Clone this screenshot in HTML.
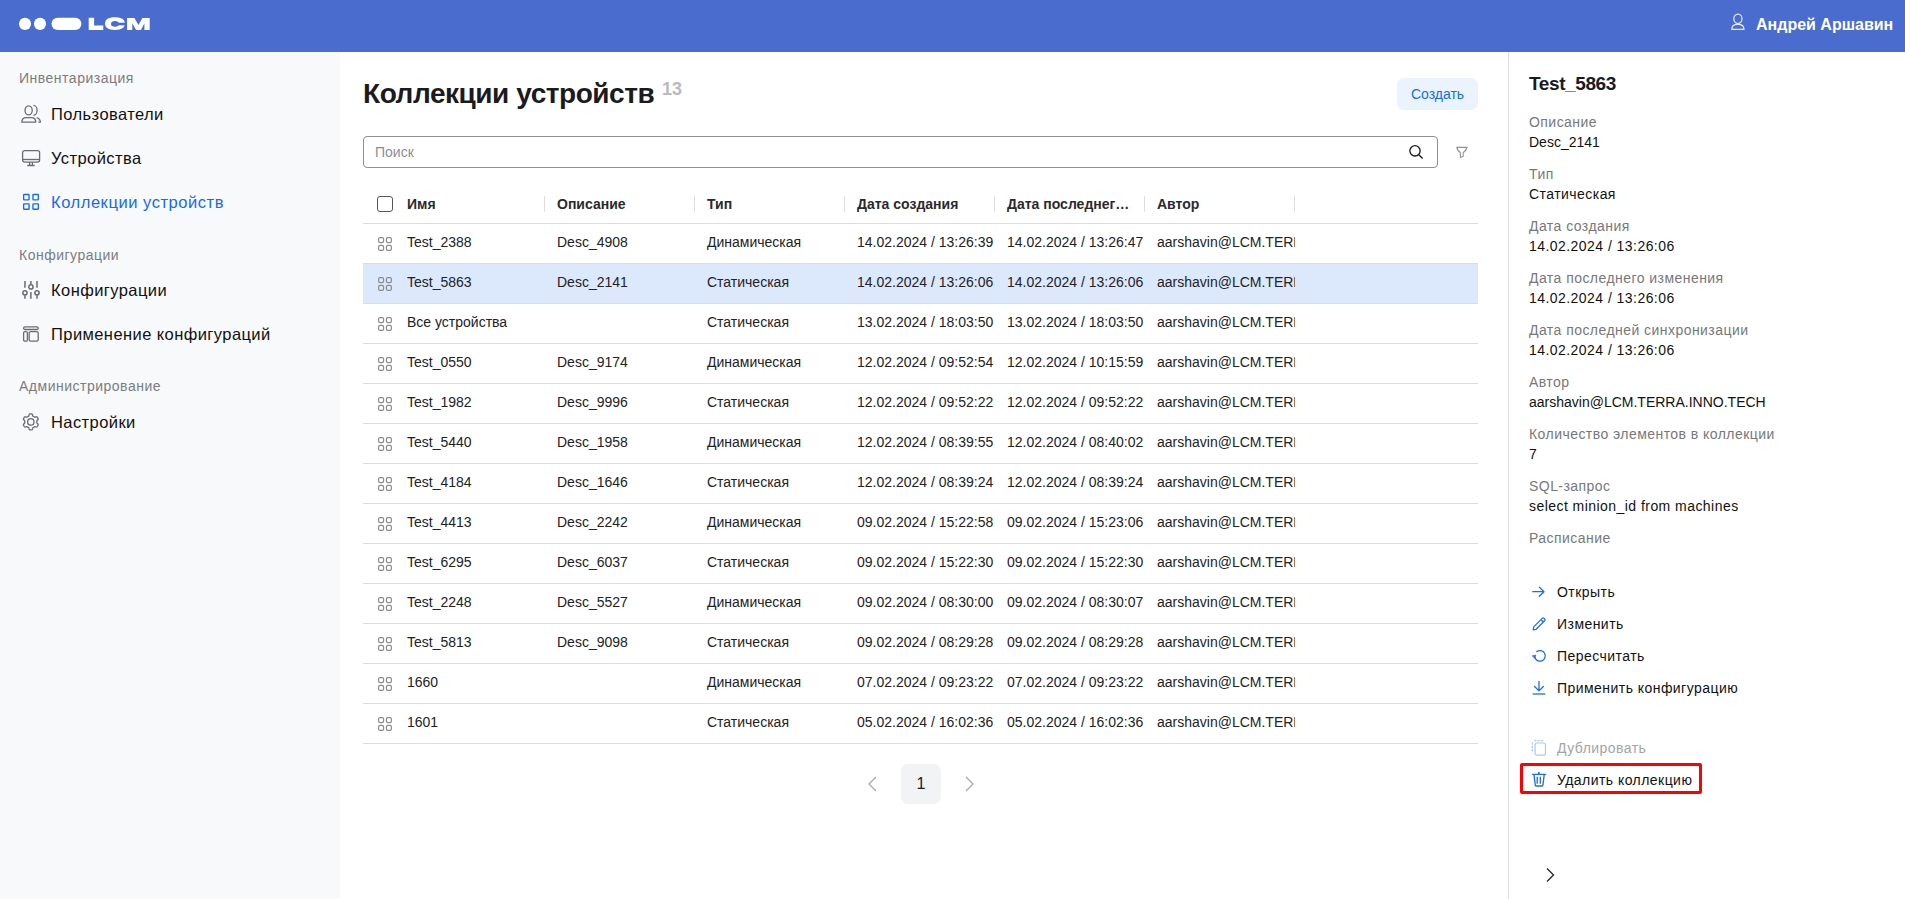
<!DOCTYPE html>
<html><head><meta charset="utf-8">
<style>
*{box-sizing:border-box;margin:0;padding:0}
html,body{width:1905px;height:899px;overflow:hidden;background:#fff;font-family:"Liberation Sans",sans-serif;color:#1b1b1f}
svg{display:block}
#hdr{position:absolute;left:0;top:0;width:1905px;height:52px;background:#4a6ccf}
#logo{position:absolute}
#user{position:absolute;left:1756px;top:15px;font-size:16px;font-weight:bold;color:#fff;line-height:20px;white-space:nowrap}
#uico{position:absolute}
#side{position:absolute;left:0;top:52px;width:340px;height:847px;background:#f8f9fb}
#panel{position:absolute;left:1508px;top:52px;width:397px;height:847px;background:#fff;border-left:1px solid #dcdde1}
.sec{position:absolute;left:19px;font-size:14px;color:#7c7c80;letter-spacing:0.5px;line-height:16px;white-space:nowrap}
.item{position:absolute;left:51px;font-size:16.5px;letter-spacing:0.42px;color:#111;line-height:20px;white-space:nowrap}
.ico{position:absolute;left:21px}
#main{position:absolute;left:340px;top:52px;width:1168px;height:847px;background:#fff}
#title{position:absolute;left:23px;top:25px;font-size:28px;font-weight:bold;color:#1b1b1f;line-height:34px;white-space:nowrap;letter-spacing:-0.45px}
#cnt{position:absolute;left:322px;top:27px;font-size:18px;font-weight:bold;color:#b9babf;line-height:20px}
#create{position:absolute;left:1057px;top:26px;width:81px;height:32px;border-radius:7px;background:#ebf3fe;color:#156af3;font-size:14px;line-height:32px;text-align:center}
#search{position:absolute;left:23px;top:84px;width:1075px;height:32px;border:1px solid #8e9096;border-radius:4px;background:#fff}
#search span{position:absolute;left:11px;top:0;line-height:30px;font-size:14px;color:#8d8e93}
#sico{position:absolute;left:1068px;top:92px}
#fico{position:absolute;left:1115px;top:94px}
#thead{position:absolute;left:23px;top:134px;width:1115px;height:38px;border-bottom:1px solid #dcdde1}
#thead .h{position:absolute;top:0;line-height:36px;font-size:14px;font-weight:bold;color:#2a2a2e;white-space:nowrap}
#thead .sep{position:absolute;top:10px;width:1px;height:16px;background:#dcdde1}
#cb{position:absolute;left:14px;top:10px;width:16px;height:16px;border:1px solid #55565b;border-radius:3px;background:#fff}
.row{position:absolute;left:363px;width:1115px;height:40px;border-bottom:1px solid #dcdde1;background:#fff}
.row.sel{background:#dce8fc}
.row .c{position:absolute;top:0;line-height:37px;font-size:14px;color:#222225;white-space:nowrap}
.row .au{width:138px;overflow:hidden}
.rico{position:absolute;left:14px;top:12px}
#pg1{position:absolute;left:901px;top:764px;width:40px;height:40px;border-radius:7px;background:#f2f3f5;font-size:16px;line-height:40px;text-align:center;color:#1b1b1f}
.ptitle{position:absolute;left:20px;top:21px;letter-spacing:-0.4px;font-size:19px;font-weight:bold;color:#1b1b1f;line-height:22px;white-space:nowrap}
.plab{position:absolute;left:20px;font-size:14px;letter-spacing:0.45px;color:#77777c;line-height:16px;white-space:nowrap}
.pval{position:absolute;left:20px;font-size:14px;color:#111;line-height:16px;white-space:nowrap}
.act{position:absolute;left:48px;font-size:14px;letter-spacing:0.45px;color:#111;line-height:16px;white-space:nowrap}
.aico{position:absolute;left:22px}
#redbox{position:absolute;left:11px;top:711px;width:182px;height:31px;border:3px solid #ff0000;border-radius:2px}
</style></head><body>
<div id="hdr">
  <svg id="logo" style="left:0;top:0" width="160" height="40" viewBox="0 0 160 40">
    <circle cx="25" cy="23.85" r="6.05" fill="#fff"/>
    <circle cx="40" cy="23.85" r="6.05" fill="#fff"/>
    <rect x="51.5" y="17.7" width="29.9" height="12.3" rx="6.15" fill="#fff"/>
    <path fill="#fff" d="M88.7 17.7 H94.1 V25.6 H103.3 V30 H88.7 Z"/>
    <path fill="#fff" d="M105.05 23.60 C105.05 19.38 108.42 17.20 114.95 17.20 C121.48 17.20 124.85 19.38 124.85 23.60 C124.85 27.82 121.48 30.00 114.95 30.00 C108.42 30.00 105.05 27.82 105.05 23.60 Z"/><path fill="#4a6ccf" d="M110.95 23.90 C110.95 22.16 112.49 21.10 115.00 21.10 C117.51 21.10 119.05 22.16 119.05 23.90 C119.05 25.64 117.51 26.70 115.00 26.70 C112.49 26.70 110.95 25.64 110.95 23.90 Z"/><rect x="115" y="22.7" width="11" height="2.6" fill="#4a6ccf"/>
    <path fill="#fff" d="M127.1 29.9 V17.9 H134.4 L138.4 25 L142.4 17.9 H149.7 V29.9 H144.4 V23.2 L141 29.9 H136.1 L132.3 23.2 V29.9 Z"/>
  </svg>
  <svg id="uico" style="left:1730px;top:13px" width="16" height="18" viewBox="0 0 16 18" fill="none" stroke="#e6ebf8" stroke-width="1.2">
    <ellipse cx="7.9" cy="5.8" rx="4.1" ry="4.7"/>
    <path d="M1.8 16.4 Q1.8 11.3 7.9 11.3 Q14 11.3 14 16.4 Z" stroke-linejoin="round"/>
  </svg>
  <div id="user">Андрей Аршавин</div>
</div>
<div id="side">
  <div class="sec" style="top:18px">Инвентаризация</div>
  <svg class="ico" style="top:52px;left:21px" width="21" height="20" viewBox="0 0 21 20" fill="none" stroke="#6b6c70" stroke-width="1.3">
    <ellipse cx="7.6" cy="6.35" rx="3.65" ry="4.55"/><path d="M0.75 18.1 Q1.2 13.65 5 13.65 H10.6 Q14.4 13.65 14.85 18.1 Z" stroke-linejoin="round"/>
    <path d="M12.4 1.4 A3.7 4.95 0 0 1 12.4 11.3"/><path d="M15.7 13.7 Q19.1 14.6 19.4 18.1 H17.4" stroke-linejoin="round"/>
  </svg>
  <div class="item" style="top:52px">Пользователи</div>
  <svg class="ico" style="top:97px" width="20" height="18" viewBox="0 0 20 18" fill="none" stroke="#6b6c70" stroke-width="1.3">
    <rect x="1.6" y="1.6" width="17" height="11.5" rx="2"/><path d="M1.6 10.5 H18.6"/><path d="M8.6 13.2 V16.2 M11.4 13.2 V16.2 M6.3 16.5 H13.7"/>
  </svg>
  <div class="item" style="top:96px">Устройства</div>
  <svg class="ico" style="top:141px;left:21px" width="20" height="18" viewBox="0 0 20 18" fill="none" stroke="#1769f0" stroke-width="1.35">
    <rect x="2.65" y="1.45" width="5.4" height="5.4" rx="0.6"/><rect x="11.95" y="1.45" width="5.4" height="5.4" rx="0.6"/><rect x="2.65" y="10.85" width="5.4" height="5.4" rx="0.6"/><rect x="11.95" y="10.85" width="5.4" height="5.4" rx="0.6"/>
  </svg>
  <div class="item" style="top:140px;color:#1769f0;letter-spacing:0.55px">Коллекции устройств</div>
  <div class="sec" style="top:195px">Конфигурации</div>
  <svg class="ico" style="top:228px;left:21px" width="20" height="20" viewBox="0 0 20 20" fill="none" stroke="#6b6c70" stroke-width="1.5">
    <path d="M3.95 1 V7.8 M3.95 15.3 V18.7 M9.9 1 V4.3 M9.9 11.9 V18.7 M16 1 V7.8 M16 15.3 V18.7"/>
    <circle cx="3.95" cy="12.8" r="2.15"/><circle cx="9.9" cy="6.9" r="2.15"/><circle cx="16" cy="12.8" r="2.15"/>
  </svg>
  <div class="item" style="top:228px">Конфигурации</div>
  <svg class="ico" style="top:273px" width="20" height="18" viewBox="0 0 20 18" fill="none" stroke="#6b6c70" stroke-width="1.3">
    <rect x="2.6" y="1.8" width="14.6" height="2.7" rx="1.3"/><rect x="2.6" y="6.6" width="3.8" height="9.6" rx="1.3"/><rect x="8.2" y="6.6" width="9" height="9.6" rx="1.4"/>
  </svg>
  <div class="item" style="top:272px">Применение конфигураций</div>
  <div class="sec" style="top:326px">Администрирование</div>
  <svg class="ico" style="top:360px;left:21px" width="20" height="20" viewBox="0 0 20 20" fill="none" stroke="#6b6c70" stroke-width="1.3">
    <path d="M9.80 1.95 L10.22 1.96 L10.63 1.99 L11.04 2.05 L11.39 2.41 L11.62 3.11 L11.77 3.82 L11.99 4.21 L12.28 4.33 L12.57 4.46 L12.85 4.62 L13.12 4.78 L13.39 4.96 L13.64 5.16 L14.08 5.15 L14.77 4.93 L15.49 4.77 L15.98 4.90 L16.23 5.23 L16.47 5.57 L16.68 5.93 L16.88 6.29 L17.06 6.67 L17.22 7.05 L17.09 7.53 L16.59 8.08 L16.05 8.57 L15.82 8.95 L15.87 9.26 L15.89 9.58 L15.90 9.90 L15.89 10.22 L15.87 10.54 L15.82 10.85 L16.05 11.23 L16.59 11.72 L17.09 12.27 L17.22 12.75 L17.06 13.13 L16.88 13.51 L16.68 13.88 L16.47 14.23 L16.23 14.57 L15.98 14.90 L15.49 15.03 L14.77 14.87 L14.08 14.65 L13.64 14.64 L13.39 14.84 L13.12 15.02 L12.85 15.18 L12.57 15.34 L12.28 15.47 L11.99 15.59 L11.77 15.98 L11.62 16.69 L11.39 17.39 L11.04 17.75 L10.63 17.81 L10.22 17.84 L9.80 17.85 L9.38 17.84 L8.97 17.81 L8.56 17.75 L8.21 17.39 L7.98 16.69 L7.83 15.98 L7.61 15.59 L7.32 15.47 L7.03 15.34 L6.75 15.18 L6.48 15.02 L6.21 14.84 L5.96 14.64 L5.52 14.65 L4.83 14.87 L4.11 15.03 L3.62 14.90 L3.37 14.57 L3.13 14.23 L2.92 13.88 L2.72 13.51 L2.54 13.13 L2.38 12.75 L2.51 12.27 L3.01 11.72 L3.55 11.23 L3.78 10.85 L3.73 10.54 L3.71 10.22 L3.70 9.90 L3.71 9.58 L3.73 9.26 L3.78 8.95 L3.55 8.57 L3.01 8.08 L2.51 7.53 L2.38 7.05 L2.54 6.67 L2.72 6.29 L2.92 5.92 L3.13 5.57 L3.37 5.23 L3.62 4.90 L4.11 4.77 L4.83 4.93 L5.52 5.15 L5.96 5.16 L6.21 4.96 L6.48 4.78 L6.75 4.62 L7.03 4.46 L7.32 4.33 L7.61 4.21 L7.83 3.82 L7.98 3.11 L8.21 2.41 L8.56 2.05 L8.97 1.99 L9.38 1.96 Z" stroke-linejoin="round"/>
    <circle cx="9.8" cy="9.9" r="3.2"/>
  </svg>
  <div class="item" style="top:360px">Настройки</div>
</div>

<div id="main">
  <div id="title">Коллекции устройств</div>
  <div id="cnt">13</div>
  <div id="create">Создать</div>
  <div id="search"><span>Поиск</span></div>
  <svg id="sico" width="16" height="16" viewBox="0 0 16 16" fill="none" stroke="#1b1b1f" stroke-width="1.35">
    <circle cx="7" cy="6.8" r="5.15"/><path d="M10.8 10.7 L14.6 14.5"/>
  </svg>
  <svg id="fico" width="14" height="13" viewBox="0 0 14 13" fill="none" stroke="#8f9399" stroke-width="1.1" stroke-linejoin="round">
    <path d="M1.2 1.4 H12.6 M2 1.6 Q2.2 4.6 5.4 6.4 V11.6 L8.2 10.3 V6.4 Q11.4 4.6 11.6 1.6"/>
  </svg>
  <div id="thead">
    <div id="cb"></div>
    <div class="h" style="left:44px">Имя</div>
    <div class="sep" style="left:181px"></div>
    <div class="h" style="left:194px">Описание</div>
    <div class="sep" style="left:331px"></div>
    <div class="h" style="left:344px">Тип</div>
    <div class="sep" style="left:481px"></div>
    <div class="h" style="left:494px">Дата создания</div>
    <div class="sep" style="left:631px"></div>
    <div class="h" style="left:644px">Дата последнег…</div>
    <div class="sep" style="left:781px"></div>
    <div class="h" style="left:794px">Автор</div>
    <div class="sep" style="left:931px"></div>
  </div>
</div>
<div class="row" style="top:224px"><svg class="rico" width="16" height="16" viewBox="0 0 16 16" fill="none" stroke="#8a8b8f" stroke-width="1.2"><rect x="1.6" y="1.6" width="5" height="5" rx="1.6"/><rect x="9.4" y="1.6" width="5" height="5" rx="1.6"/><rect x="1.6" y="9.4" width="5" height="5" rx="1.6"/><rect x="9.4" y="9.4" width="5" height="5" rx="1.6"/></svg><span class="c" style="left:44px">Test_2388</span><span class="c" style="left:194px">Desc_4908</span><span class="c" style="left:344px">Динамическая</span><span class="c" style="left:494px">14.02.2024 / 13:26:39</span><span class="c" style="left:644px">14.02.2024 / 13:26:47</span><span class="c au" style="left:794px">aarshavin@LCM.TERRA.INNO.TECH</span></div>
<div class="row sel" style="top:264px"><svg class="rico" width="16" height="16" viewBox="0 0 16 16" fill="none" stroke="#8a8b8f" stroke-width="1.2"><rect x="1.6" y="1.6" width="5" height="5" rx="1.6"/><rect x="9.4" y="1.6" width="5" height="5" rx="1.6"/><rect x="1.6" y="9.4" width="5" height="5" rx="1.6"/><rect x="9.4" y="9.4" width="5" height="5" rx="1.6"/></svg><span class="c" style="left:44px">Test_5863</span><span class="c" style="left:194px">Desc_2141</span><span class="c" style="left:344px">Статическая</span><span class="c" style="left:494px">14.02.2024 / 13:26:06</span><span class="c" style="left:644px">14.02.2024 / 13:26:06</span><span class="c au" style="left:794px">aarshavin@LCM.TERRA.INNO.TECH</span></div>
<div class="row" style="top:304px"><svg class="rico" width="16" height="16" viewBox="0 0 16 16" fill="none" stroke="#8a8b8f" stroke-width="1.2"><rect x="1.6" y="1.6" width="5" height="5" rx="1.6"/><rect x="9.4" y="1.6" width="5" height="5" rx="1.6"/><rect x="1.6" y="9.4" width="5" height="5" rx="1.6"/><rect x="9.4" y="9.4" width="5" height="5" rx="1.6"/></svg><span class="c" style="left:44px">Все устройства</span><span class="c" style="left:194px"></span><span class="c" style="left:344px">Статическая</span><span class="c" style="left:494px">13.02.2024 / 18:03:50</span><span class="c" style="left:644px">13.02.2024 / 18:03:50</span><span class="c au" style="left:794px">aarshavin@LCM.TERRA.INNO.TECH</span></div>
<div class="row" style="top:344px"><svg class="rico" width="16" height="16" viewBox="0 0 16 16" fill="none" stroke="#8a8b8f" stroke-width="1.2"><rect x="1.6" y="1.6" width="5" height="5" rx="1.6"/><rect x="9.4" y="1.6" width="5" height="5" rx="1.6"/><rect x="1.6" y="9.4" width="5" height="5" rx="1.6"/><rect x="9.4" y="9.4" width="5" height="5" rx="1.6"/></svg><span class="c" style="left:44px">Test_0550</span><span class="c" style="left:194px">Desc_9174</span><span class="c" style="left:344px">Динамическая</span><span class="c" style="left:494px">12.02.2024 / 09:52:54</span><span class="c" style="left:644px">12.02.2024 / 10:15:59</span><span class="c au" style="left:794px">aarshavin@LCM.TERRA.INNO.TECH</span></div>
<div class="row" style="top:384px"><svg class="rico" width="16" height="16" viewBox="0 0 16 16" fill="none" stroke="#8a8b8f" stroke-width="1.2"><rect x="1.6" y="1.6" width="5" height="5" rx="1.6"/><rect x="9.4" y="1.6" width="5" height="5" rx="1.6"/><rect x="1.6" y="9.4" width="5" height="5" rx="1.6"/><rect x="9.4" y="9.4" width="5" height="5" rx="1.6"/></svg><span class="c" style="left:44px">Test_1982</span><span class="c" style="left:194px">Desc_9996</span><span class="c" style="left:344px">Статическая</span><span class="c" style="left:494px">12.02.2024 / 09:52:22</span><span class="c" style="left:644px">12.02.2024 / 09:52:22</span><span class="c au" style="left:794px">aarshavin@LCM.TERRA.INNO.TECH</span></div>
<div class="row" style="top:424px"><svg class="rico" width="16" height="16" viewBox="0 0 16 16" fill="none" stroke="#8a8b8f" stroke-width="1.2"><rect x="1.6" y="1.6" width="5" height="5" rx="1.6"/><rect x="9.4" y="1.6" width="5" height="5" rx="1.6"/><rect x="1.6" y="9.4" width="5" height="5" rx="1.6"/><rect x="9.4" y="9.4" width="5" height="5" rx="1.6"/></svg><span class="c" style="left:44px">Test_5440</span><span class="c" style="left:194px">Desc_1958</span><span class="c" style="left:344px">Динамическая</span><span class="c" style="left:494px">12.02.2024 / 08:39:55</span><span class="c" style="left:644px">12.02.2024 / 08:40:02</span><span class="c au" style="left:794px">aarshavin@LCM.TERRA.INNO.TECH</span></div>
<div class="row" style="top:464px"><svg class="rico" width="16" height="16" viewBox="0 0 16 16" fill="none" stroke="#8a8b8f" stroke-width="1.2"><rect x="1.6" y="1.6" width="5" height="5" rx="1.6"/><rect x="9.4" y="1.6" width="5" height="5" rx="1.6"/><rect x="1.6" y="9.4" width="5" height="5" rx="1.6"/><rect x="9.4" y="9.4" width="5" height="5" rx="1.6"/></svg><span class="c" style="left:44px">Test_4184</span><span class="c" style="left:194px">Desc_1646</span><span class="c" style="left:344px">Статическая</span><span class="c" style="left:494px">12.02.2024 / 08:39:24</span><span class="c" style="left:644px">12.02.2024 / 08:39:24</span><span class="c au" style="left:794px">aarshavin@LCM.TERRA.INNO.TECH</span></div>
<div class="row" style="top:504px"><svg class="rico" width="16" height="16" viewBox="0 0 16 16" fill="none" stroke="#8a8b8f" stroke-width="1.2"><rect x="1.6" y="1.6" width="5" height="5" rx="1.6"/><rect x="9.4" y="1.6" width="5" height="5" rx="1.6"/><rect x="1.6" y="9.4" width="5" height="5" rx="1.6"/><rect x="9.4" y="9.4" width="5" height="5" rx="1.6"/></svg><span class="c" style="left:44px">Test_4413</span><span class="c" style="left:194px">Desc_2242</span><span class="c" style="left:344px">Динамическая</span><span class="c" style="left:494px">09.02.2024 / 15:22:58</span><span class="c" style="left:644px">09.02.2024 / 15:23:06</span><span class="c au" style="left:794px">aarshavin@LCM.TERRA.INNO.TECH</span></div>
<div class="row" style="top:544px"><svg class="rico" width="16" height="16" viewBox="0 0 16 16" fill="none" stroke="#8a8b8f" stroke-width="1.2"><rect x="1.6" y="1.6" width="5" height="5" rx="1.6"/><rect x="9.4" y="1.6" width="5" height="5" rx="1.6"/><rect x="1.6" y="9.4" width="5" height="5" rx="1.6"/><rect x="9.4" y="9.4" width="5" height="5" rx="1.6"/></svg><span class="c" style="left:44px">Test_6295</span><span class="c" style="left:194px">Desc_6037</span><span class="c" style="left:344px">Статическая</span><span class="c" style="left:494px">09.02.2024 / 15:22:30</span><span class="c" style="left:644px">09.02.2024 / 15:22:30</span><span class="c au" style="left:794px">aarshavin@LCM.TERRA.INNO.TECH</span></div>
<div class="row" style="top:584px"><svg class="rico" width="16" height="16" viewBox="0 0 16 16" fill="none" stroke="#8a8b8f" stroke-width="1.2"><rect x="1.6" y="1.6" width="5" height="5" rx="1.6"/><rect x="9.4" y="1.6" width="5" height="5" rx="1.6"/><rect x="1.6" y="9.4" width="5" height="5" rx="1.6"/><rect x="9.4" y="9.4" width="5" height="5" rx="1.6"/></svg><span class="c" style="left:44px">Test_2248</span><span class="c" style="left:194px">Desc_5527</span><span class="c" style="left:344px">Динамическая</span><span class="c" style="left:494px">09.02.2024 / 08:30:00</span><span class="c" style="left:644px">09.02.2024 / 08:30:07</span><span class="c au" style="left:794px">aarshavin@LCM.TERRA.INNO.TECH</span></div>
<div class="row" style="top:624px"><svg class="rico" width="16" height="16" viewBox="0 0 16 16" fill="none" stroke="#8a8b8f" stroke-width="1.2"><rect x="1.6" y="1.6" width="5" height="5" rx="1.6"/><rect x="9.4" y="1.6" width="5" height="5" rx="1.6"/><rect x="1.6" y="9.4" width="5" height="5" rx="1.6"/><rect x="9.4" y="9.4" width="5" height="5" rx="1.6"/></svg><span class="c" style="left:44px">Test_5813</span><span class="c" style="left:194px">Desc_9098</span><span class="c" style="left:344px">Статическая</span><span class="c" style="left:494px">09.02.2024 / 08:29:28</span><span class="c" style="left:644px">09.02.2024 / 08:29:28</span><span class="c au" style="left:794px">aarshavin@LCM.TERRA.INNO.TECH</span></div>
<div class="row" style="top:664px"><svg class="rico" width="16" height="16" viewBox="0 0 16 16" fill="none" stroke="#8a8b8f" stroke-width="1.2"><rect x="1.6" y="1.6" width="5" height="5" rx="1.6"/><rect x="9.4" y="1.6" width="5" height="5" rx="1.6"/><rect x="1.6" y="9.4" width="5" height="5" rx="1.6"/><rect x="9.4" y="9.4" width="5" height="5" rx="1.6"/></svg><span class="c" style="left:44px">1660</span><span class="c" style="left:194px"></span><span class="c" style="left:344px">Динамическая</span><span class="c" style="left:494px">07.02.2024 / 09:23:22</span><span class="c" style="left:644px">07.02.2024 / 09:23:22</span><span class="c au" style="left:794px">aarshavin@LCM.TERRA.INNO.TECH</span></div>
<div class="row" style="top:704px"><svg class="rico" width="16" height="16" viewBox="0 0 16 16" fill="none" stroke="#8a8b8f" stroke-width="1.2"><rect x="1.6" y="1.6" width="5" height="5" rx="1.6"/><rect x="9.4" y="1.6" width="5" height="5" rx="1.6"/><rect x="1.6" y="9.4" width="5" height="5" rx="1.6"/><rect x="9.4" y="9.4" width="5" height="5" rx="1.6"/></svg><span class="c" style="left:44px">1601</span><span class="c" style="left:194px"></span><span class="c" style="left:344px">Статическая</span><span class="c" style="left:494px">05.02.2024 / 16:02:36</span><span class="c" style="left:644px">05.02.2024 / 16:02:36</span><span class="c au" style="left:794px">aarshavin@LCM.TERRA.INNO.TECH</span></div>
<svg style="position:absolute;left:866px;top:776px" width="12" height="16" viewBox="0 0 12 16" fill="none" stroke="#a3a6ab" stroke-width="1.2"><path d="M10 1 L3 8 L10 15"/></svg>
<div id="pg1">1</div>
<svg style="position:absolute;left:964px;top:776px" width="12" height="16" viewBox="0 0 12 16" fill="none" stroke="#a3a6ab" stroke-width="1.2"><path d="M2 1 L9 8 L2 15"/></svg>

<div id="panel">
  <div class="ptitle">Test_5863</div>
<div class="plab" style="top:62px">Описание</div>
<div class="pval" style="top:82px;letter-spacing:0">Desc_2141</div>
<div class="plab" style="top:114px">Тип</div>
<div class="pval" style="top:134px;letter-spacing:0.45px">Статическая</div>
<div class="plab" style="top:166px">Дата создания</div>
<div class="pval" style="top:186px;letter-spacing:0.45px">14.02.2024 / 13:26:06</div>
<div class="plab" style="top:218px">Дата последнего изменения</div>
<div class="pval" style="top:238px;letter-spacing:0.45px">14.02.2024 / 13:26:06</div>
<div class="plab" style="top:270px">Дата последней синхронизации</div>
<div class="pval" style="top:290px;letter-spacing:0.45px">14.02.2024 / 13:26:06</div>
<div class="plab" style="top:322px">Автор</div>
<div class="pval" style="top:342px;letter-spacing:0">aarshavin@LCM.TERRA.INNO.TECH</div>
<div class="plab" style="top:374px">Количество элементов в коллекции</div>
<div class="pval" style="top:394px;letter-spacing:0.45px">7</div>
<div class="plab" style="top:426px">SQL-запрос</div>
<div class="pval" style="top:446px;letter-spacing:0.45px">select minion_id from machines</div>
<div class="plab" style="top:478px">Расписание</div>
  <svg class="aico" style="left:22px;top:532px" width="16" height="16" viewBox="0 0 16 16" fill="none" stroke="#1a6cf2" stroke-width="1.3" stroke-linecap="round" stroke-linejoin="round"><path d="M1.8 7.7 H13 M8.3 3.1 L13 7.7 L8.3 12.3"/></svg>
  <div class="act" style="top:532px">Открыть</div>
  <svg class="aico" style="left:22px;top:564px" width="16" height="16" viewBox="0 0 16 16" fill="none" stroke="#1a6cf2" stroke-width="1.25" stroke-linejoin="round"><path d="M2.2 13.8 L2.7 10.9 L11.2 2.4 Q12.2 1.4 13.2 2.4 L13.6 2.8 Q14.6 3.8 13.6 4.8 L5.1 13.3 Z M10 3.6 L12.4 6"/></svg>
  <div class="act" style="top:564px">Изменить</div>
  <svg class="aico" style="left:22px;top:596px" width="16" height="16" viewBox="0 0 16 16" fill="none" stroke="#1a6cf2" stroke-width="1.3" stroke-linecap="round"><path d="M3.8 9.2 A5.3 5.3 0 1 0 5.8 3.6"/><path d="M1.4 7.8 L5 7.1 L3.8 10.1 Z" fill="#1a6cf2" stroke-width="0.6" stroke-linejoin="round"/></svg>
  <div class="act" style="top:596px">Пересчитать</div>
  <svg class="aico" style="left:22px;top:628px" width="16" height="16" viewBox="0 0 16 16" fill="none" stroke="#1a6cf2" stroke-width="1.3" stroke-linecap="round" stroke-linejoin="round"><path d="M8 1.3 V10.8 M3.6 6.5 L8 10.9 L12.4 6.5"/><path d="M1.7 14 H14.3" stroke-linecap="butt"/></svg>
  <div class="act" style="top:628px">Применить конфигурацию</div>
  <svg class="aico" style="left:22px;top:688px" width="16" height="16" viewBox="0 0 16 16" fill="none" stroke="#a9c7fb" stroke-width="1.2"><rect x="4.1" y="3" width="10.4" height="12.2" rx="2"/><path d="M3.2 0.6 H11.8" stroke-width="1.3" stroke-dasharray="2.2 1.1"/><path d="M1.3 2.4 V12" stroke-width="1.3" stroke-dasharray="2.2 1.1"/></svg>
  <div class="act" style="top:688px;color:#a3a4a8">Дублировать</div>
  <div id="redbox"></div>
  <svg class="aico" style="left:22px;top:719px" width="16" height="16" viewBox="0 0 16 16" fill="none" stroke="#1a6cf2" stroke-width="1.3" stroke-linejoin="round"><path d="M1.5 3.3 H14.5" stroke-linecap="round"/><path d="M7.9 1 V3.3" stroke-width="1.6"/><path d="M3 3.6 L4.3 14.3 Q4.5 15 5.3 15 H10.9 Q11.7 15 11.9 14.3 L13.2 3.6"/><path d="M6.2 6.2 V12.3 M9.3 6.2 V12.3" stroke-linecap="round"/></svg>
  <div class="act" style="top:720px">Удалить коллекцию</div>
  <svg style="position:absolute;left:35.5px;top:815px" width="10" height="16" viewBox="0 0 10 16" fill="none" stroke="#2b2b30" stroke-width="1.4"><path d="M2 1.5 L8.5 8 L2 14.5"/></svg>
</div>
</body></html>
